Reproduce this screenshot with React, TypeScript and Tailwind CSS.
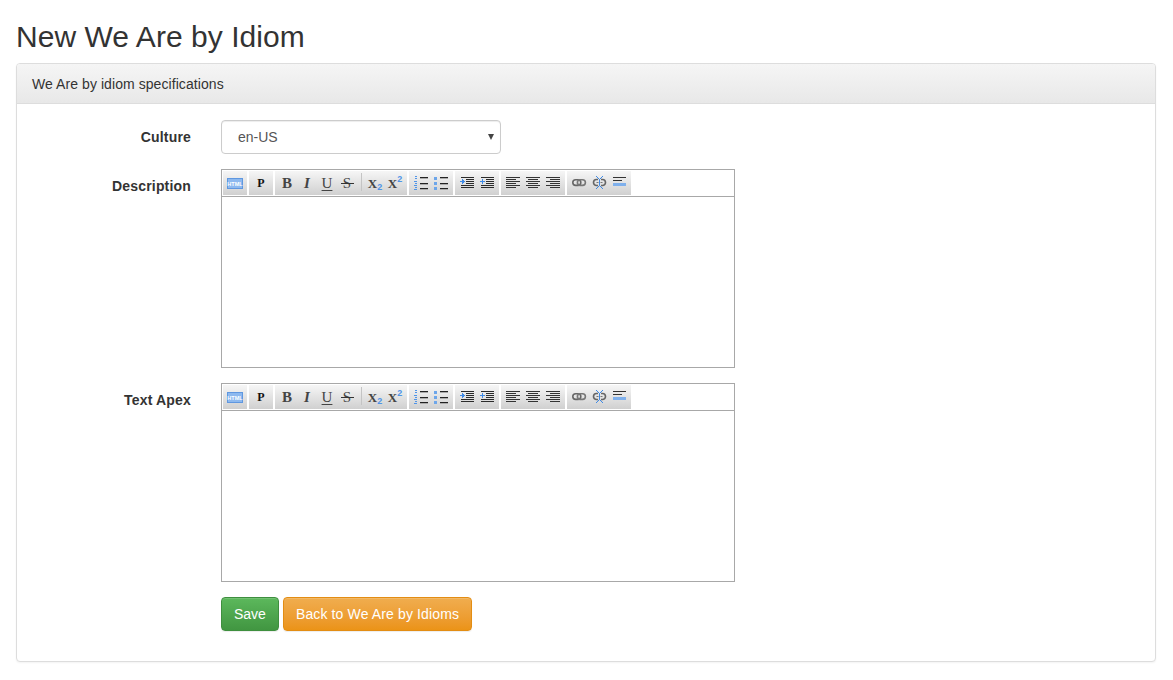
const sans = { fontFamily: '"Liberation Sans", Arial, sans-serif' };

function Glyph({ children, className = "text-[15px] font-bold text-[#444]" }: { children: React.ReactNode; className?: string }) {
  return (
    <span className={"relative flex h-5 w-5 items-center justify-center [font-family:'Liberation_Serif',serif] leading-none " + className}>
      {children}
    </span>
  );
}

function Icon({ children }: { children: React.ReactNode }) {
  return (
    <svg width="20" height="20" viewBox="0 0 20 20" fill="none" shapeRendering="crispEdges">
      {children}
    </svg>
  );
}

function Lines({ rows, color = "#333" }: { rows: [number, number, number][]; color?: string }) {
  return (
    <>
      {rows.map(([x, y, w], i) => (
        <rect key={i} x={x} y={y} width={w} height={1} fill={color} />
      ))}
    </>
  );
}

const alignLeft: [number, number, number][] = [[3, 4, 14], [3, 6, 10], [3, 8, 14], [3, 10, 10], [3, 12, 14], [3, 14, 10]];
const alignCenter: [number, number, number][] = [[3, 4, 14], [5, 6, 10], [3, 8, 14], [5, 10, 10], [3, 12, 14], [5, 14, 10]];
const alignRight: [number, number, number][] = [[3, 4, 14], [7, 6, 10], [3, 8, 14], [7, 10, 10], [3, 12, 14], [7, 14, 10]];

function IndentIcon({ out }: { out?: boolean }) {
  return (
    <Icon>
      <Lines rows={[[4, 4, 13], [9, 6, 8], [9, 8, 8], [9, 10, 8], [4, 12, 13], [4, 14, 13]]} color="#2b2b2b" />
      {out ? (
        <path d="M3 8h2V6h1v2h2v1H6v2H5V9H3z" fill="#3f8ae6" />
      ) : (
        <path d="M3 8h2V6h1v1h1v1h1v1H7v1H6v1H5V9H3z" fill="#3f8ae6" />
      )}
    </Icon>
  );
}

function ListLines() {
  return (
    <>
      <Lines rows={[[9, 4, 8], [9, 10, 8], [9, 15, 8]]} color="#222" />
      <Lines rows={[[9, 5, 8], [9, 11, 8], [9, 16, 8]]} color="#aaa" />
    </>
  );
}

function ToolbarGroup({ children }: { children: React.ReactNode }) {
  return <div className="flex h-6 bg-gradient-to-b from-[#f6f6f6] to-[#d0d0d0] px-[2px] pt-[2px]">{children}</div>;
}

function Editor() {
  return (
    <div className="w-[514px] border border-[#a8a8a8]">
      <div className="flex h-[27px] gap-[2px] border-b border-[#a8a8a8] bg-white px-px pt-px">
        <ToolbarGroup>
          <Icon>
            <rect x="2" y="5" width="16" height="11" fill="#5f97e0" />
            <rect x="3" y="6" width="14" height="9" fill="#8db9ef" />
            <text x="10" y="13" textAnchor="middle" fontSize="5.5" fontWeight="700" fill="#fff" fontFamily="Liberation Sans">HTML</text>
          </Icon>
        </ToolbarGroup>
        <ToolbarGroup>
          <Glyph className="text-[12px] font-bold text-[#111]">P</Glyph>
        </ToolbarGroup>
        <ToolbarGroup>
          <Glyph>B</Glyph>
          <Glyph className="text-[15px] font-bold italic text-[#444]">I</Glyph>
          <Glyph className="text-[15px] font-normal text-[#444] underline underline-offset-2">U</Glyph>
          <Glyph className="text-[15px] font-normal text-[#444]">
            S
            <span className="absolute left-[4px] top-[10px] h-px w-[13px] bg-[#333]" />
          </Glyph>
          <span className="ml-[4px] mr-[3px] h-[18px] w-px bg-[#c4c4c4]" />
          <Glyph className="text-[13px] font-bold text-[#444]">
            X<span className="mt-2 text-[9px] text-[#4f94e8] [font-family:'Liberation_Sans',sans-serif]">2</span>
          </Glyph>
          <Glyph className="text-[13px] font-bold text-[#444]">
            X<span className="-mt-2 text-[9px] text-[#4f94e8] [font-family:'Liberation_Sans',sans-serif]">2</span>
          </Glyph>
        </ToolbarGroup>
        <ToolbarGroup>
          <Icon>
            <ListLines />
            <Lines rows={[[4, 3, 2], [4, 5, 2], [3, 8, 3], [4, 10, 2], [3, 12, 3], [4, 14, 2], [3, 16, 3]]} color="#4f94e8" />
          </Icon>
          <Icon>
            <ListLines />
            <rect x="3" y="4" width="3" height="3" fill="#6da6ea" />
            <rect x="3" y="9" width="3" height="3" fill="#6da6ea" />
            <rect x="3" y="14" width="3" height="3" fill="#6da6ea" />
          </Icon>
        </ToolbarGroup>
        <ToolbarGroup>
          <IndentIcon />
          <IndentIcon out />
        </ToolbarGroup>
        <ToolbarGroup>
          <Icon><Lines rows={alignLeft} /></Icon>
          <Icon><Lines rows={alignCenter} /></Icon>
          <Icon><Lines rows={alignRight} /></Icon>
        </ToolbarGroup>
        <ToolbarGroup>
          <svg width="20" height="20" viewBox="0 0 20 20" fill="none">
            <rect x="3.8" y="6.8" width="8" height="5.6" rx="2.8" stroke="#666" strokeWidth="1.6" />
            <rect x="8.4" y="6.8" width="8" height="5.6" rx="2.8" stroke="#777" strokeWidth="1.6" />
          </svg>
          <svg width="20" height="20" viewBox="0 0 20 20" fill="none">
            <path d="M9 6.5H7.5a3 3 0 0 0 0 6H9M12 6.5h1.5a3 3 0 0 1 0 6H12" stroke="#666" strokeWidth="1.6" />
            <path d="M7.5 9.5h2M11.5 9.5h2" stroke="#777" strokeWidth="1" />
            <path d="M7 3l3.5 3.5L14 3M7 16l3.5-3.5L14 16M10.5 6.5v6" stroke="#3f8ae6" strokeWidth="1" />
          </svg>
          <Icon>
            <Lines rows={[[4, 4, 13], [4, 7, 9]]} />
            <rect x="4" y="10" width="13" height="3" fill="#7fb0ec" />
          </Icon>
        </ToolbarGroup>
      </div>
      <div className="h-[170px] bg-white" />
    </div>
  );
}

function Row({ label, children }: { label: string; children: React.ReactNode }) {
  return (
    <div className="flex">
      <label className="w-[159px] shrink-0 pt-[7px] text-right text-sm font-bold leading-5 tracking-[0.18px] text-[#333]">{label}</label>
      <div className="ml-[30px]">{children}</div>
    </div>
  );
}

export default function App() {
  return (
    <div className="min-h-screen bg-white px-4 pt-5 text-sm text-[#333]" style={sans}>
      <h1 className="mb-[10px] text-[30px] font-normal leading-[33px] tracking-[0.05px] text-[#333]">New We Are by Idiom</h1>
      <div className="h-[599px] w-[1140px] rounded border border-[#ddd] bg-white shadow-[0_1px_2px_rgba(0,0,0,0.05)]">
        <div className="h-10 rounded-t-[3px] border-b border-[#ddd] bg-gradient-to-b from-[#f5f5f5] to-[#e8e8e8] px-[15px] py-[10px] leading-5 tracking-[0.07px]">
          We Are by idiom specifications
        </div>
        <div className="flex flex-col gap-[15px] px-[15px] pt-[16px]">
          <Row label="Culture">
            <div className="relative w-[280px]">
              <select
                defaultValue="en-US"
                className="h-[34px] w-full appearance-none rounded border border-[#ccc] bg-white pl-4 pr-6 text-sm text-[#555] shadow-[inset_0_1px_1px_rgba(0,0,0,0.075)]"
                style={sans}
              >
                <option>en-US</option>
              </select>
              <span className="pointer-events-none absolute right-[7px] top-[14px] h-0 w-0 border-x-[3px] border-t-[6px] border-x-transparent border-t-[#444]" />
            </div>
          </Row>
          <Row label="Description">
            <Editor />
          </Row>
          <Row label="Text Apex">
            <Editor />
          </Row>
          <div className="ml-[189px] flex gap-1">
            <button className="h-[34px] rounded border border-[#3e8f3e] bg-gradient-to-b from-[#5cb85c] to-[#419641] px-3 text-sm text-white shadow-[inset_0_1px_0_rgba(255,255,255,0.15),0_1px_1px_rgba(0,0,0,0.075)]">
              Save
            </button>
            <button className="h-[34px] rounded border border-[#e38d13] bg-gradient-to-b from-[#f0ad4e] to-[#eb9316] px-3 text-sm tracking-[0.13px] text-white shadow-[inset_0_1px_0_rgba(255,255,255,0.15),0_1px_1px_rgba(0,0,0,0.075)]">
              Back to We Are by Idioms
            </button>
          </div>
        </div>
      </div>
    </div>
  );
}
